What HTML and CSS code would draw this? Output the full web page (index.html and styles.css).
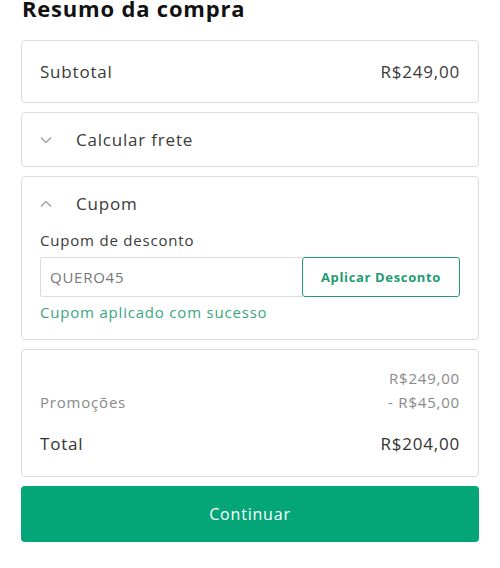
FILE: index.html
```html
<!DOCTYPE html>
<html lang="pt-BR">
<head>
    <meta charset="UTF-8">
    <title>Resumo da compra</title>
    <link rel="stylesheet" href="styles.css">
</head>
<body>
    <div class="summary">
        <h2 class="summary-title">Resumo da compra</h2>

        <div class="card row">
            <span>Subtotal</span>
            <span>R$249,00</span>
        </div>

        <div class="card toggle">
            <svg class="chevron" viewBox="0 0 12 8" width="12" height="8"><path d="M1 1.5l5 5 5-5" /></svg>
            <span>Calcular frete</span>
        </div>

        <div class="card coupon">
            <div class="toggle-head">
                <svg class="chevron" viewBox="0 0 12 8" width="12" height="8"><path d="M1 6.5l5-5 5 5" /></svg>
                <span>Cupom</span>
            </div>
            <label class="coupon-label" for="coupon">Cupom de desconto</label>
            <div class="coupon-form">
                <input id="coupon" type="text" value="QUERO45">
                <button class="apply-btn">Aplicar Desconto</button>
            </div>
            <p class="coupon-ok">Cupom aplicado com sucesso</p>
        </div>

        <div class="card totals">
            <div class="line muted">
                <span></span>
                <span>R$249,00</span>
            </div>
            <div class="line muted">
                <span>Promoções</span>
                <span>- R$45,00</span>
            </div>
            <div class="line total">
                <span>Total</span>
                <span>R$204,00</span>
            </div>
        </div>

        <button class="continue-btn">Continuar</button>
    </div>
</body>
</html>
```

FILE: styles.css
```css
* {
    margin: 0;
    padding: 0;
    box-sizing: border-box;
}

body {
    font-family: "Open Sans", "DejaVu Sans", sans-serif;
    letter-spacing: 0.05em;
    background: #fff;
    color: #3a3a3a;
}

.summary {
    width: 458px;
    margin-left: 21px;
    margin-top: -7px;
    display: flex;
    flex-direction: column;
    gap: 9px;
}

.summary-title {
    font-size: 22px;
    font-weight: 700;
    color: #111;
    line-height: 30px;
    margin-left: 1px;
    margin-bottom: 8px;
}

.card {
    border: 1px solid #dcdcdc;
    border-radius: 4px;
    background: #fff;
    font-size: 17px;
}

.row {
    height: 63px;
    padding: 0 18px;
    display: flex;
    align-items: center;
    justify-content: space-between;
}

.toggle,
.toggle-head {
    display: flex;
    align-items: center;
    gap: 24px;
}

.toggle {
    height: 55px;
    padding: 0 18px;
}

.chevron {
    fill: none;
    stroke: #999;
    stroke-width: 1.2;
}

.coupon {
    padding: 14px 18px 17px;
}

.toggle-head {
    height: 25px;
    margin-bottom: 14px;
}

.coupon-label {
    display: block;
    font-size: 15px;
    line-height: 20px;
    margin-bottom: 7px;
}

.coupon-form {
    display: flex;
    height: 40px;
}

.coupon-form input {
    flex: 1;
    min-width: 0;
    border: 1px solid #dcdcdc;
    border-right: none;
    border-radius: 3px 0 0 3px;
    padding: 0 9px;
    font: inherit;
    font-size: 15px;
    letter-spacing: 0.05em;
    color: #777;
    outline: none;
}

.apply-btn {
    width: 158px;
    border: 1px solid #1f9c73;
    border-radius: 3px;
    background: #fff;
    color: #1f9c73;
    font: inherit;
    font-size: 13px;
    font-weight: 700;
    letter-spacing: 0.05em;
    cursor: pointer;
}

.coupon-ok {
    margin-top: 5px;
    font-size: 15px;
    color: #3aa57e;
}

.totals {
    padding: 16px 18px 20px;
}

.line {
    display: flex;
    justify-content: space-between;
}

.line.muted {
    font-size: 15px;
    line-height: 24px;
    color: #888;
}

.line.total {
    margin-top: 18px;
    font-size: 17px;
    line-height: 24px;
    color: #333;
}

.continue-btn {
    height: 56px;
    border: none;
    border-radius: 4px;
    background: #04a678;
    color: #fff;
    font: inherit;
    font-size: 16px;
    letter-spacing: 0.05em;
    cursor: pointer;
}
```
